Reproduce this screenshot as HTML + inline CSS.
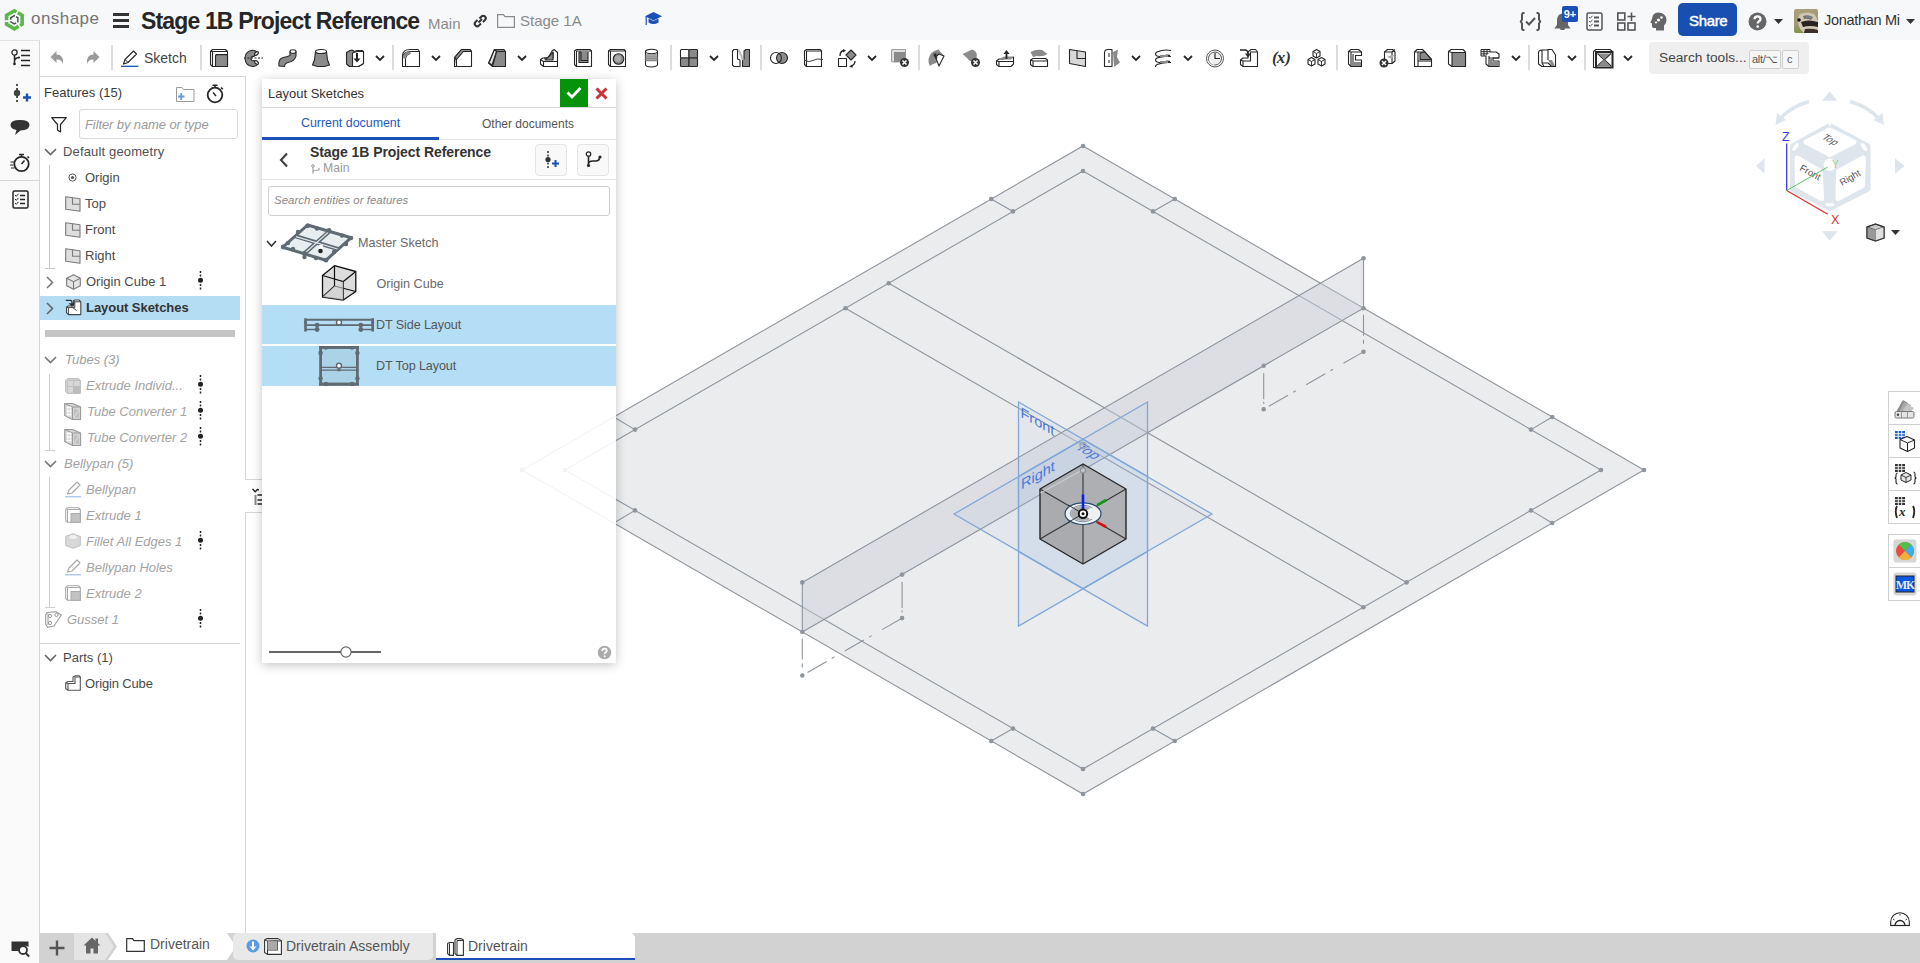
<!DOCTYPE html>
<html><head><meta charset="utf-8">
<style>
*{box-sizing:border-box;margin:0;padding:0}
html,body{width:1920px;height:963px;overflow:hidden;background:#fff;font-family:"Liberation Sans",sans-serif;color:#333}
.a{position:absolute}
.t{position:absolute;white-space:nowrap;line-height:1}
svg{position:absolute;overflow:visible}
#hdr{left:0;top:0;width:1920px;height:40px;background:#f7f8fa}
#tb{left:39px;top:40px;width:1881px;height:37px;background:#fff}
#lcol{left:0;top:40px;width:40px;height:923px;background:#fafafa;border-right:1px solid #d6d6d6;border-top:1px solid #e2e2e2}
#fp{left:39px;top:76px;width:207px;height:857px;background:#fff;border:1px solid #d6d6d6;border-bottom:none}
#bot{left:39px;top:933px;width:1881px;height:30px;background:#d2d2d2}
.sep{position:absolute;top:45px;width:2px;height:25px;background:#dcdcdc}
.fi{font-size:13px;color:#4a4a4a}
.gi{font-size:13px;color:#a3a3a3;font-style:italic}
</style></head>
<body>
<div id="hdr" class="a"></div>
<div id="tb" class="a"></div>
<div id="lcol" class="a"></div>
<svg class="a" style="left:0;top:0" width="1920" height="963" viewBox="0 0 1920 963">
<polygon points="1083.0,146.0 1644.0,470.0 1083.0,794.0 522.0,470.0" fill="#ebecee" stroke="#8e959c" stroke-width="1.1"/>
<polygon points="1083.0,171.0 1601.0,470.0 1083.0,769.0 565.0,470.0" fill="none" stroke="#8e959c" stroke-width="1.1"/>
<path d="M991.2 199.0L1013.0 211.4 M991.2 741.0L1013.0 728.6 M1174.8 199.0L1153.0 211.4 M1174.8 741.0L1153.0 728.6 M1552.2 417.0L1531.0 429.6 M613.8 417.0L635.0 429.6 M1552.2 523.0L1531.0 510.4 M613.8 523.0L635.0 510.4 M888.7 283.2L1406.6 582.4 M845.5 308.2L1363.4 607.2" stroke="#8e959c" stroke-width="1.1" fill="none"/>
<polygon points="802.3,582.4 1363.5,258.3 1363.5,308.2 802.3,632.0" fill="#c9ced6" fill-opacity="0.45" stroke="#8e959c" stroke-width="1.1"/>
<path d="M1363.5 308.2L1363.5 351.8 M802.3 632.0L802.3 675.5" stroke="#8e959c" stroke-width="1.1" fill="none" stroke-dasharray="0 6.5 21 4 4 20"/>
<path d="M1263.7 365.8L1263.7 409.2 M902.1 574.6L902.1 618.1" stroke="#8e959c" stroke-width="1.1" fill="none" stroke-dasharray="0 7.5 26 2.5 2 20"/>
<path d="M1263.7 409.2L1363.5 351.8 M802.3 675.5L902.1 618.1" stroke="#8e959c" stroke-width="1.1" fill="none" stroke-dasharray="0 6 22 6 3 6" stroke-dashoffset="0"/>
<g fill="#8e959c"><circle cx="991.2" cy="199.0" r="2.3"/><circle cx="1013.0" cy="211.4" r="2.3"/><circle cx="991.2" cy="741.0" r="2.3"/><circle cx="1013.0" cy="728.6" r="2.3"/><circle cx="1174.8" cy="199.0" r="2.3"/><circle cx="1153.0" cy="211.4" r="2.3"/><circle cx="1174.8" cy="741.0" r="2.3"/><circle cx="1153.0" cy="728.6" r="2.3"/><circle cx="1552.2" cy="417.0" r="2.3"/><circle cx="1531.0" cy="429.6" r="2.3"/><circle cx="613.8" cy="417.0" r="2.3"/><circle cx="635.0" cy="429.6" r="2.3"/><circle cx="1552.2" cy="523.0" r="2.3"/><circle cx="1531.0" cy="510.4" r="2.3"/><circle cx="613.8" cy="523.0" r="2.3"/><circle cx="635.0" cy="510.4" r="2.3"/><circle cx="1083.0" cy="146.0" r="2.3"/><circle cx="1644.0" cy="470.0" r="2.3"/><circle cx="1083.0" cy="794.0" r="2.3"/><circle cx="522.0" cy="470.0" r="2.3"/><circle cx="1083.0" cy="171.0" r="2.3"/><circle cx="1601.0" cy="470.0" r="2.3"/><circle cx="1083.0" cy="769.0" r="2.3"/><circle cx="565.0" cy="470.0" r="2.3"/><circle cx="888.7" cy="283.2" r="2.3"/><circle cx="1406.6" cy="582.4" r="2.3"/><circle cx="845.5" cy="308.2" r="2.3"/><circle cx="1363.4" cy="607.2" r="2.3"/><circle cx="802.3" cy="582.4" r="2.3"/><circle cx="1363.5" cy="258.3" r="2.3"/><circle cx="1363.5" cy="308.2" r="2.3"/><circle cx="802.3" cy="632.0" r="2.3"/><circle cx="1363.5" cy="351.8" r="2.3"/><circle cx="1263.7" cy="365.8" r="2.3"/><circle cx="1263.7" cy="409.2" r="2.3"/><circle cx="802.3" cy="675.5" r="2.3"/><circle cx="902.1" cy="574.6" r="2.3"/><circle cx="902.1" cy="618.1" r="2.3"/></g>
<polygon points="1018.5,402.0 1147.5,476.5 1147.5,626.0 1018.5,551.5" fill="#9dbbe0" fill-opacity="0.10" stroke="#80a8d6" stroke-width="1.3"/>
<polygon points="1147.5,402.0 1018.5,476.5 1018.5,626.0 1147.5,551.5" fill="#9dbbe0" fill-opacity="0.10" stroke="#80a8d6" stroke-width="1.3"/>
<polygon points="954.0,514.0 1083.0,439.5 1212.0,514.0 1083.0,588.5" fill="#9dbbe0" fill-opacity="0.10" stroke="#80a8d6" stroke-width="1.3"/>
<g fill="#4a78d8" font-family="Liberation Sans" font-size="14.5">
<text transform="matrix(1,0.57735,0,1,1020.5,416.7)">Front</text>
<text transform="matrix(1,-0.57735,0,1,1021,489.8)">Right</text>
<text transform="matrix(0.866,0.5,-0.866,0.5,1074,448)">Top</text>
</g>
<circle cx="1083" cy="445.5" r="3" fill="none" stroke="#9aa3ad" stroke-width="1.3"/>
<polygon points="1083.0,464.0 1126.0,489.0 1083.0,514.0 1040.0,489.0" fill="#adafb2"/>
<polygon points="1040.0,489.0 1083.0,514.0 1083.0,564.0 1040.0,539.0" fill="#a9abae"/>
<polygon points="1126.0,489.0 1126.0,539.0 1083.0,564.0 1083.0,514.0" fill="#afb1b4"/>
<polygon points="1083.0,464.0 1126.0,489.0 1126.0,539.0 1083.0,564.0 1040.0,539.0 1040.0,489.0" fill="none" stroke="#262626" stroke-width="1.4" stroke-linejoin="round"/>
<path d="M1083 514L1083 464 M1083 514L1126 489 M1083 514L1126 539 M1083 514L1083 564 M1083 514L1040 539 M1083 514L1040 489" stroke="#333" stroke-width="1.1"/>
<path d="M1040.5 493L1082.6 470" stroke="#c9ccd0" stroke-width="1.3"/>
<circle cx="1083" cy="470.3" r="2.6" fill="#c4c6c9" stroke="#8f959b" stroke-width="1.2"/>
<ellipse cx="1083" cy="513.7" rx="18" ry="10.8" fill="#eef0f2" stroke="#2a4d72" stroke-width="1.2"/>
<path d="M1092.3 508A12.6 8.3 0 1 0 1092.3 519L1083 513.7Z" fill="#abadb0" stroke="#f4f5f6" stroke-width="1.6"/>
<path d="M1083 513.7L1068 505M1083 513.7L1068 522.5" stroke="#333" stroke-width="1"/>
<path d="M1092.3 508A12.6 8.3 0 1 0 1092.3 519" fill="none" stroke="#2a4d72" stroke-width="0.6"/>
<path d="M1083 494.5V510" stroke="#0c1ee8" stroke-width="2.6"/>
<path d="M1097.2 505.2L1106.2 500" stroke="#129a12" stroke-width="2.6"/>
<path d="M1097.2 522.2L1106.2 527" stroke="#d41414" stroke-width="2.6"/>
<circle cx="1083" cy="513.7" r="5.2" fill="#111"/><circle cx="1083" cy="513.7" r="3.2" fill="#fff"/><circle cx="1083" cy="513.7" r="1.5" fill="#111"/>
</svg>
<div id="fp" class="a"></div>
<div id="bot" class="a"></div>
<svg style="left:0;top:0" width="40" height="40">
 <path d="M14.35 10.80 L22.14 15.30 L22.14 24.30 L14.35 28.80 L6.56 24.30 L6.56 15.30 Z" fill="none" stroke="#5ab946" stroke-width="3.6" stroke-dasharray="16.4 1.6" stroke-dashoffset="14"/>
 <path d="M14.35 15.70 L17.90 17.75 L17.90 21.85 L14.35 23.90 L10.80 21.85 L10.80 17.75 Z" fill="none" stroke="#505050" stroke-width="1.5" stroke-dasharray="6.9 1.3" stroke-dashoffset="6.2"/>
</svg>
<div class="t" style="left:31px;top:10px;font-size:17px;color:#747474;letter-spacing:0.45px">onshape</div>
<div class="a" style="left:113px;top:13px;width:16px;height:3px;background:#333"></div>
<div class="a" style="left:113px;top:19px;width:16px;height:3px;background:#333"></div>
<div class="a" style="left:113px;top:25px;width:16px;height:3px;background:#333"></div>
<div class="t" style="left:141px;top:10px;font-size:23px;font-weight:bold;color:#262626;letter-spacing:-0.85px">Stage 1B Project Reference</div>
<div class="t" style="left:428px;top:16px;font-size:15px;color:#8a8a8a">Main</div>
<svg style="left:473px;top:14px" width="15" height="14" viewBox="0 0 15 14"><g fill="none" stroke="#333" stroke-width="2"><path d="M6.5 4.5L8.5 2.5A2.3 2.3 0 0 1 12 6L10 8"/><path d="M8 9.5L6 11.5A2.3 2.3 0 0 1 2.5 8L4.5 6"/><path d="M5.5 8.5L9 5"/></g></svg>
<svg style="left:497px;top:14px" width="19" height="14" viewBox="0 0 19 14"><path d="M0.6 0.6H6.5L8 2.6H17.4V13.4H0.6Z" fill="none" stroke="#8a8a8a" stroke-width="1.2"/></svg>
<div class="t" style="left:520px;top:13px;font-size:15px;color:#8a8a8a">Stage 1A</div>
<svg style="left:645px;top:12px" width="17" height="16" viewBox="0 0 17 16"><path d="M8.5 0L17 4.2L8.5 8.4L0 4.2Z" fill="#1a50b8"/><path d="M3.5 6.5V10.5Q8.5 13.5 13.5 10.5V6.5L8.5 9Z" fill="#1a50b8"/><path d="M1.2 4.5V13" stroke="#1a50b8" stroke-width="1.2"/></svg>

<!-- right header -->
<svg style="left:1520px;top:12px" width="21" height="19" viewBox="0 0 21 19"><g fill="none" stroke="#555" stroke-width="2"><path d="M4.5 1H3.5Q2 1 2 3V7.5L0.8 9.5L2 11.5V16Q2 18 3.5 18H4.5"/><path d="M16.5 1H17.5Q19 1 19 3V7.5L20.2 9.5L19 11.5V16Q19 18 17.5 18H16.5"/><path d="M6 9.5L9 12.5L15 6"/></g></svg>
<svg style="left:1554px;top:6px" width="25" height="24" viewBox="0 0 25 24"><path d="M8 7.5Q3 8.5 3 14.5V19L0.2 22.5H16.5L14 19V14" fill="#666"/><rect x="6" y="21" width="5" height="3" rx="1.5" fill="#666"/><rect x="8" y="0" width="16" height="16" rx="2" fill="#1a50b8"/><text x="16" y="12" font-family="Liberation Sans" font-weight="bold" font-size="11" fill="#fff" text-anchor="middle">9+</text></svg>
<svg style="left:1586px;top:12px" width="17" height="19" viewBox="0 0 17 19"><rect x="1" y="1" width="15" height="17" rx="1.5" fill="none" stroke="#555" stroke-width="1.5"/><g stroke="#555" stroke-width="1.8"><path d="M8 5.5H13M8 9.5H13M8 13.5H13"/></g><g fill="none" stroke="#555" stroke-width="1"><path d="M3 5L4.3 6.3L6.5 3.8M3 9L4.3 10.3L6.5 7.8M3 13L4.3 14.3L6.5 11.8"/></g></svg>
<svg style="left:1617px;top:12px" width="19" height="19" viewBox="0 0 19 19"><g fill="none" stroke="#555" stroke-width="1.6"><rect x="0.8" y="1" width="7" height="7"/><rect x="0.8" y="11" width="7" height="7"/><rect x="11" y="11" width="7" height="7"/><path d="M14.5 0.5V9M10.5 4.5H18.5"/></g></svg>
<svg style="left:1650px;top:12px" width="17" height="19" viewBox="0 0 17 19"><path d="M8 0.5Q16 0.5 16.5 8Q16.5 11.5 14 13.5V18.5H6V16H3.5Q2 16 2 14V11.5L0.3 10.5L2 7Q2.5 0.5 8 0.5Z" fill="#666"/><g fill="#f7f8fa"><circle cx="8.5" cy="8" r="1.6"/><circle cx="11.5" cy="5.5" r="1.3"/><circle cx="6" cy="10.5" r="1.1"/></g></svg>
<div class="a" style="left:1678px;top:3px;width:59px;height:33px;background:#1a4fb2;border-radius:5px"></div>
<div class="t" style="left:1689px;top:12.5px;font-size:15px;color:#fff;letter-spacing:-0.35px;-webkit-text-stroke:0.45px #fff">Share</div>
<svg style="left:1748px;top:12px" width="19" height="19" viewBox="0 0 19 19"><circle cx="9.5" cy="9.5" r="9" fill="#666"/><path d="M6.5 7.2Q6.5 4.3 9.5 4.3Q12.5 4.3 12.5 7Q12.5 8.6 10.8 9.5Q9.7 10.2 9.7 11.5" fill="none" stroke="#fff" stroke-width="2.2"/><circle cx="9.7" cy="14.6" r="1.3" fill="#fff"/></svg>
<svg style="left:1774px;top:19px" width="9" height="5" viewBox="0 0 9 5"><path d="M0 0H9L4.5 5Z" fill="#333"/></svg>
<svg style="left:1794px;top:9px" width="24" height="24" viewBox="0 0 24 24"><defs><linearGradient id="av" x1="0" y1="0" x2="0.3" y2="1"><stop offset="0" stop-color="#b0a07a"/><stop offset="0.6" stop-color="#a09a70"/><stop offset="1" stop-color="#7e9048"/></linearGradient></defs><rect width="24" height="24" rx="2" fill="url(#av)"/><path d="M6 5Q13 2 20 5Q24 9 24 16V24H10Q5 20 4 14Q3 9 6 5Z" fill="#cfc6b6"/><path d="M7 13Q14 10 24 13V18Q16 16 9 18Z" fill="#2a2420"/><path d="M11 20Q18 19 24 21V24H10Z" fill="#3a3028"/><path d="M9 7Q14 5 19 8L17 11Q13 9 10 10Z" fill="#7a7060"/><circle cx="5" cy="11" r="1.8" fill="#111"/><path d="M12 8Q15 7 17 9" stroke="#6a8aa0" stroke-width="1.2" fill="none"/></svg>
<div class="t" style="left:1824px;top:12px;font-size:14.5px;color:#333;letter-spacing:-0.3px;margin-top:1px">Jonathan Mi</div>
<svg style="left:1906px;top:19px" width="9" height="5" viewBox="0 0 9 5"><path d="M0 0H9L4.5 5Z" fill="#333"/></svg>

<svg style="left:11px;top:49px" width="20" height="18" viewBox="0 0 20 18"><circle cx="3.5" cy="3.5" r="2.6" fill="none" stroke="#262626" stroke-width="1.3"/><path d="M3.5 6V15M3.5 12Q3.5 9 8 8.5" fill="none" stroke="#262626" stroke-width="1.5"/><circle cx="3.5" cy="15" r="1.3" fill="#262626"/><circle cx="8" cy="8.5" r="1.1" fill="#262626"/><path d="M10 1.5H19M10 6.5H19M10 11.5H19M10 16.5H19" stroke="#262626" stroke-width="1.6"/></svg>
<svg style="left:50px;top:50px" width="15" height="15" viewBox="0 0 15 15"><path d="M0.5 7L6.5 1V4.5Q14 4.5 13 14Q11.5 9 6.5 9.5V13Z" fill="#9a9a9a"/></svg>
<svg style="left:85px;top:50px" width="15" height="15" viewBox="0 0 15 15"><path d="M14.5 7L8.5 1V4.5Q1 4.5 2 14Q3.5 9 8.5 9.5V13Z" fill="#9a9a9a"/></svg>
<div class="sep" style="left:111px"></div>
<svg style="left:121px;top:50px" width="18" height="18" viewBox="0 0 18 18"><path d="M2.5 14L4 9.5L12.5 1L15.5 4L7 12.5Z" fill="none" stroke="#262626" stroke-width="1.1" stroke-linejoin="round"/><path d="M4 9.5L7 12.5" stroke="#262626" stroke-width="1"/><path d="M0 16.3H17.5" stroke="#1a50b8" stroke-width="1.3"/></svg>
<div class="t" style="left:144px;top:51px;font-size:14px;color:#444">Sketch</div>
<div class="sep" style="left:200px"></div>
<svg style="left:210px;top:49px" width="20" height="19" viewBox="0 0 20 19"><path d="M0.5 2.5L2.5 0.5H15.5L17.5 2.5V17.5H2.5L0.5 15.5Z" fill="#fff" stroke="#262626" stroke-width="1.1" stroke-linejoin="round"/><path d="M2.5 17.5V2.5H17.5M0.5 2.5H2.5" fill="none" stroke="#262626" stroke-width="1.1" stroke-linejoin="round"/><rect x="5.5" y="6.5" width="12" height="11" fill="#8a8a8a" stroke="#262626" stroke-width="1.1" stroke-linejoin="round"/><path d="M5.5 6.5L6.5 5.5H16.5L17.5 6.5" fill="#bbb" stroke="#262626" stroke-width="1.1" stroke-linejoin="round"/></svg>
<svg style="left:244px;top:49px" width="20" height="19" viewBox="0 0 20 19"><path d="M13 3Q10 0.5 7 1.5Q1 3 1 9.5Q1.5 17 9 17.5Q12 17.5 14 15L10 11.5Q9 12 8 11.5Q6 10 7.5 8Q9 7 10 7.5Z" fill="#8a8a8a" stroke="#262626" stroke-width="1.1" stroke-linejoin="round"/><ellipse cx="12.5" cy="4.5" rx="1.4" ry="2.2" transform="rotate(45 12.5 4.5)" fill="#fff" stroke="#262626" stroke-width="1.1" stroke-linejoin="round"/><ellipse cx="12.5" cy="13.5" rx="1.4" ry="2.2" transform="rotate(-45 12.5 13.5)" fill="#fff" stroke="#262626" stroke-width="1.1" stroke-linejoin="round"/><path d="M0 9H19" stroke="#262626" stroke-width="1" stroke-dasharray="2 1.5"/></svg>
<svg style="left:278px;top:49px" width="20" height="19" viewBox="0 0 20 19"><path d="M1 17Q0 10 5 8.5Q9 8 12 6.5V2.5H18V7Q17 12 10 13.5Q7 14 6.5 17.5Z" fill="#8a8a8a" stroke="#262626" stroke-width="1.1" stroke-linejoin="round"/><ellipse cx="15" cy="2.6" rx="3" ry="1.9" fill="#fff" stroke="#262626" stroke-width="1.1" stroke-linejoin="round"/></svg>
<svg style="left:312px;top:49px" width="20" height="19" viewBox="0 0 20 19"><path d="M3.5 2.5L2.5 11L0.5 16L5.5 17.5H12.5L17.5 16L15.5 11L14.5 2.5Z" fill="#8a8a8a" stroke="#262626" stroke-width="1.1" stroke-linejoin="round"/><ellipse cx="9" cy="2.5" rx="5.5" ry="2" fill="#fff" stroke="#262626" stroke-width="1.1" stroke-linejoin="round"/></svg>
<svg style="left:346px;top:49px" width="20" height="19" viewBox="0 0 20 19"><path d="M0.5 3.5L4 1.5Q7 0.5 8 2.5L11 1.5H16L17.5 2.5V14.5L12.5 17.5H3.5L0.5 15Z" fill="#8a8a8a" stroke="#262626" stroke-width="1.1" stroke-linejoin="round"/><path d="M6.5 4Q9 3 12 2.5H17.5V14.5L12.5 17.5H6.5Z" fill="#fff" stroke="#262626" stroke-width="1.1" stroke-linejoin="round"/><path d="M11 4V10" stroke="#262626" stroke-width="2"/><path d="M7.5 9.5H14.5L11 13.5Z" fill="#262626"/></svg>
<svg style="left:375px;top:55px" width="10" height="7" viewBox="0 0 10 7"><path d="M1 1L5 5L9 1" fill="none" stroke="#262626" stroke-width="1.8"/></svg>
<div class="sep" style="left:392px"></div>
<svg style="left:402px;top:49px" width="20" height="19" viewBox="0 0 20 19"><path d="M0.5 17.5V7Q0.5 0.5 8 0.5H16L17.5 2.5V17.5Z" fill="#fff" stroke="#262626" stroke-width="1.1" stroke-linejoin="round"/><path d="M0.5 9Q1 3 7.5 2.5H17.5M3.5 17.5V10Q4 5 8.5 4.5" fill="none" stroke="#262626" stroke-width="1.1" stroke-linejoin="round"/><path d="M1 9Q1 3 7.5 2.5L9 4.5Q4 5 3.5 10Z" fill="#8a8a8a"/></svg>
<svg style="left:431px;top:55px" width="10" height="7" viewBox="0 0 10 7"><path d="M1 1L5 5L9 1" fill="none" stroke="#262626" stroke-width="1.8"/></svg>
<svg style="left:454px;top:49px" width="20" height="19" viewBox="0 0 20 19"><path d="M0.5 17.5V8.5L7.5 0.5H16L17.5 2.5V17.5H2.5Z" fill="#fff" stroke="#262626" stroke-width="1.1" stroke-linejoin="round"/><path d="M0.5 8.5L7.5 0.5H16L17.5 2.5H9.5L2.5 10.5V17.5" fill="#8a8a8a" stroke="#262626" stroke-width="1.1" stroke-linejoin="round"/><path d="M2.5 10.5L0.5 8.5" stroke="#262626" stroke-width="1.1" stroke-linejoin="round"/></svg>
<svg style="left:488px;top:49px" width="20" height="19" viewBox="0 0 20 19"><path d="M6.5 0.5H16L17.5 2.5V17.5H4.5L0.5 14Z" fill="#8a8a8a" stroke="#262626" stroke-width="1.1" stroke-linejoin="round"/><path d="M6.5 0.5L8.5 2.5L4.5 17.5M8.5 2.5H17.5" fill="none" stroke="#262626" stroke-width="1.1" stroke-linejoin="round"/><path d="M6.5 0.5L8.5 2.5L4 16L1 14Z" fill="#e8e8e8" stroke="#262626" stroke-width="1.1" stroke-linejoin="round"/></svg>
<svg style="left:517px;top:55px" width="10" height="7" viewBox="0 0 10 7"><path d="M1 1L5 5L9 1" fill="none" stroke="#262626" stroke-width="1.8"/></svg>
<svg style="left:540px;top:49px" width="20" height="19" viewBox="0 0 20 19"><path d="M0.5 10.5L3 9H8L12 2L14 0.5L17.5 3.5V17.5H3.5L0.5 15Z" fill="#fff" stroke="#262626" stroke-width="1.1" stroke-linejoin="round"/><path d="M4 9H13V2.5M3.5 17.5V12.5L0.5 10.5M3.5 12.5H17.5" fill="none" stroke="#262626" stroke-width="1.1" stroke-linejoin="round"/><path d="M5 11L13 3.5V11Z" fill="#8a8a8a" stroke="#262626" stroke-width="1.1" stroke-linejoin="round"/></svg>
<svg style="left:574px;top:49px" width="20" height="19" viewBox="0 0 20 19"><path d="M0.5 2L2.5 0.5H16L17.5 2V17.5H2.5L0.5 15.5Z" fill="#fff" stroke="#262626" stroke-width="1.1" stroke-linejoin="round"/><path d="M2.5 17.5V2H17.5" fill="none" stroke="#262626" stroke-width="1.1" stroke-linejoin="round"/><path d="M5 3V13.5H14V3" fill="#8a8a8a" stroke="#262626" stroke-width="1.1" stroke-linejoin="round"/><path d="M5 3H7V11.5H14" fill="none" stroke="#262626" stroke-width="1.1" stroke-linejoin="round"/></svg>
<svg style="left:608px;top:49px" width="20" height="19" viewBox="0 0 20 19"><path d="M0.5 2L2.5 0.5H16L17.5 2V17.5H2.5L0.5 15.5Z" fill="#fff" stroke="#262626" stroke-width="1.1" stroke-linejoin="round"/><path d="M2.5 17.5V2H17.5M0.5 2H2.5" fill="none" stroke="#262626" stroke-width="1.1" stroke-linejoin="round"/><circle cx="10.5" cy="10" r="5.3" fill="#8a8a8a" stroke="#262626" stroke-width="1.1" stroke-linejoin="round"/><circle cx="10" cy="9.5" r="3.2" fill="#aaa"/></svg>
<svg style="left:645px;top:49px" width="14" height="19" viewBox="0 0 14 19"><path d="M0.5 2.5V15.5A6 2.5 0 0 0 12.5 15.5V2.5" fill="#fff" stroke="#262626" stroke-width="1.1" stroke-linejoin="round"/><ellipse cx="6.5" cy="2.5" rx="6" ry="2.2" fill="#fff" stroke="#262626" stroke-width="1.1" stroke-linejoin="round"/><path d="M0.5 6H12.5M0.5 7.8H12.5M0.5 9.6H12.5M0.5 11.4H12.5" stroke="#8a8a8a" stroke-width="1.2"/><rect x="0.5" y="5" width="12" height="7.5" fill="#8a8a8a" opacity=".55"/></svg>
<div class="sep" style="left:670px"></div>
<svg style="left:680px;top:49px" width="20" height="19" viewBox="0 0 20 19"><rect x="0.5" y="0.5" width="8.5" height="8.5" rx="1" fill="#fff" stroke="#262626" stroke-width="1.1" stroke-linejoin="round"/><rect x="9" y="0.5" width="8.5" height="8.5" rx="1" fill="#8a8a8a" stroke="#262626" stroke-width="1.1" stroke-linejoin="round"/><rect x="0.5" y="9" width="8.5" height="8.5" rx="1" fill="#8a8a8a" stroke="#262626" stroke-width="1.1" stroke-linejoin="round"/><rect x="9" y="9" width="8.5" height="8.5" rx="1" fill="#8a8a8a" stroke="#262626" stroke-width="1.1" stroke-linejoin="round"/></svg>
<svg style="left:709px;top:55px" width="10" height="7" viewBox="0 0 10 7"><path d="M1 1L5 5L9 1" fill="none" stroke="#262626" stroke-width="1.8"/></svg>
<svg style="left:732px;top:49px" width="20" height="19" viewBox="0 0 20 19"><path d="M0.5 2L2 0.5H5.5V10L8 11V17.5H2L0.5 16Z" fill="#fff" stroke="#262626" stroke-width="1.1" stroke-linejoin="round"/><path d="M12 2L14 0.5H17.5V17.5H10.5V11L12 10Z" fill="#8a8a8a" stroke="#262626" stroke-width="1.1" stroke-linejoin="round"/><path d="M6.5 0.5L11 11" stroke="#bbb" stroke-width="2"/></svg>
<div class="sep" style="left:760px"></div>
<svg style="left:770px;top:49px" width="20" height="19" viewBox="0 0 20 19"><circle cx="6" cy="9" r="5.5" fill="#fff" stroke="#262626" stroke-width="1.1" stroke-linejoin="round"/><circle cx="12" cy="9" r="5.5" fill="#8a8a8a" stroke="#262626" stroke-width="1.1" stroke-linejoin="round"/><path d="M9 4.4A5.5 5.5 0 0 1 9 13.6" fill="none" stroke="#262626" stroke-width="1.1" stroke-linejoin="round"/></svg>
<svg style="left:804px;top:49px" width="20" height="19" viewBox="0 0 20 19"><path d="M0.5 2L2.5 0.5H16L17.5 2V17.5H2.5L0.5 15.5Z" fill="#fff" stroke="#262626" stroke-width="1.1" stroke-linejoin="round"/><path d="M2.5 17.5V2H17.5" fill="none" stroke="#262626" stroke-width="1.1" stroke-linejoin="round"/><path d="M0 11Q5 14 9 11.5Q13 9 19 10.5" fill="none" stroke="#444" stroke-width="1"/></svg>
<svg style="left:838px;top:49px" width="20" height="19" viewBox="0 0 20 19"><rect x="0.5" y="9.5" width="8" height="8" fill="#fff" stroke="#262626" stroke-width="1.1" stroke-linejoin="round"/><path d="M13 1L18 6L13 11L8 6Z" fill="#8a8a8a" stroke="#262626" stroke-width="1.1" stroke-linejoin="round"/><path d="M2 7Q2 2 6 1.5" fill="none" stroke="#262626" stroke-width="1.3"/><path d="M5 0L8 1.5L5 3.5Z" fill="#262626"/><path d="M17 12Q17 16 12.5 17.5" fill="none" stroke="#262626" stroke-width="1.3"/><path d="M14 15.5L11 18L15 18.5Z" fill="#262626"/></svg>
<svg style="left:867px;top:55px" width="10" height="7" viewBox="0 0 10 7"><path d="M1 1L5 5L9 1" fill="none" stroke="#262626" stroke-width="1.8"/></svg>
<svg style="left:891px;top:49px" width="20" height="19" viewBox="0 0 20 19"><path d="M0.5 1.5L1.5 0.5H14.5V13H1.5L0.5 12Z" fill="#e0e0e0" stroke="#262626" stroke-width="1.1" stroke-linejoin="round" stroke-opacity=".4"/><rect x="3" y="3" width="11.5" height="10" fill="#8a8a8a"/><circle cx="13.5" cy="13.5" r="4.5" fill="#333"/><path d="M11.5 11.5L15.5 15.5M15.5 11.5L11.5 15.5" stroke="#fff" stroke-width="1.5"/></svg>
<div class="sep" style="left:918px"></div>
<svg style="left:927px;top:49px" width="20" height="19" viewBox="0 0 20 19"><path d="M1.5 10Q3 2 11.5 0.5L13.5 3L17 6.5Q12 9 9 14Q5 15 3 17Q1 14 1.5 10Z" fill="#8a8a8a"/><path d="M8.5 8L12 5L17 7L14 13L12 17L10 12Z" fill="#fff" stroke="#262626" stroke-width="1.1" stroke-linejoin="round"/><path d="M7 6L10 9.5" stroke="#262626" stroke-width="1.5"/><path d="M6 4.5H9.5V8Z" fill="#262626"/></svg>
<svg style="left:962px;top:49px" width="20" height="19" viewBox="0 0 20 19"><path d="M0.5 5Q5 3 10 0.5Q13 1 14.5 4Q16 9 12 13Q8 13 5 9Q3 7 0.5 5Z" fill="#8a8a8a"/><circle cx="13.5" cy="13.5" r="4.5" fill="#333"/><path d="M11.5 11.5L15.5 15.5M15.5 11.5L11.5 15.5" stroke="#fff" stroke-width="1.5"/></svg>
<svg style="left:996px;top:49px" width="20" height="19" viewBox="0 0 20 19"><path d="M0.5 12L3 10H7L17.5 8V15L15 17.5H3L0.5 15.5Z" fill="#fff" stroke="#262626" stroke-width="1.1" stroke-linejoin="round"/><path d="M3 17.5V12.5H17.5M0.5 12L3 12.5" fill="none" stroke="#262626" stroke-width="1.1" stroke-linejoin="round"/><path d="M3 10L8 7.5H15L17.5 8.5L15 10.5H4Z" fill="#8a8a8a"/><path d="M10.5 10V4" stroke="#262626" stroke-width="1.8"/><path d="M7.5 5H13.5L10.5 1Z" fill="#262626"/></svg>
<svg style="left:1030px;top:49px" width="20" height="19" viewBox="0 0 20 19"><path d="M0.5 11L3 9.5H15.5L17.5 11V17.5H3L0.5 15.5Z" fill="#fff" stroke="#262626" stroke-width="1.1" stroke-linejoin="round"/><path d="M3 17.5V12H17.5M0.5 11L3 12" fill="none" stroke="#262626" stroke-width="1.1" stroke-linejoin="round"/><path d="M0.5 3Q6 0 12 1L17.5 5Q13 8 7 7L3 8Z" fill="#8a8a8a"/></svg>
<div class="sep" style="left:1058px"></div>
<svg style="left:1069px;top:49px" width="20" height="19" viewBox="0 0 20 19"><path d="M0.5 0.5L16.5 3V17.5L0.5 14.5Z" fill="#d8d8d8" stroke="#262626" stroke-width="1.1" stroke-linejoin="round"/><path d="M8 2V9.5H16.5" fill="none" stroke="#262626" stroke-width="1.1" stroke-linejoin="round"/></svg>
<svg style="left:1104px;top:49px" width="17" height="19" viewBox="0 0 17 19"><path d="M0.5 17.5V4Q0.5 0.5 4 0.5H8V17.5Z" fill="#fff" stroke="#262626" stroke-width="1.1" stroke-linejoin="round"/><path d="M5 4V8M5 11V14" stroke="#262626" stroke-width="1"/><path d="M9 3L14 0.5L13 8L16 13.5L10 18Z" fill="#8a8a8a"/></svg>
<svg style="left:1131px;top:55px" width="10" height="7" viewBox="0 0 10 7"><path d="M1 1L5 5L9 1" fill="none" stroke="#262626" stroke-width="1.8"/></svg>
<svg style="left:1154px;top:49px" width="20" height="19" viewBox="0 0 20 19"><g fill="none" stroke="#262626" stroke-width="1.2"><path d="M17 1.5Q10 0 3 3Q0 5 3 7Q8 8.5 15 7Q17 6 12 6"/><path d="M17 7.5Q10 6.5 3 9Q0 11 3 13Q8 14.5 15 13Q17 12 12 12"/><path d="M17 13.5Q10 13 3 15.5Q1 17 1.5 18"/></g><path d="M6 7H14M6 13H14" stroke="#8a8a8a" stroke-width="2"/></svg>
<svg style="left:1183px;top:55px" width="10" height="7" viewBox="0 0 10 7"><path d="M1 1L5 5L9 1" fill="none" stroke="#262626" stroke-width="1.8"/></svg>
<svg style="left:1206px;top:49px" width="20" height="19" viewBox="0 0 20 19"><circle cx="9" cy="9.5" r="8.5" fill="#fff" stroke="#555" stroke-width="1"/><circle cx="9" cy="9.5" r="6.5" fill="#eee" stroke="#555" stroke-width="1"/><path d="M9 4V9.5H14" fill="none" stroke="#262626" stroke-width="1.2"/><path d="M3 9.5A6 6 0 0 0 9 16" fill="#fff"/></svg>
<svg style="left:1240px;top:49px" width="20" height="19" viewBox="0 0 20 19"><path d="M0.5 11L3 9H8V3L11 0.5H15.5L17.5 3V17.5H3L0.5 15.5Z" fill="#fff" stroke="#262626" stroke-width="1.1" stroke-linejoin="round"/><path d="M3 17.5V12H10.5V3H17.5M0.5 11L3 12" fill="none" stroke="#262626" stroke-width="1.1" stroke-linejoin="round"/><path d="M0 1H5Q8 1 8 5" fill="none" stroke="#262626" stroke-width="1.3"/><path d="M5 4.5H11L8 8.5Z" fill="#262626"/></svg>
<div class="t" style="left:1272px;top:49px;font-family:'Liberation Serif',serif;font-size:17px;font-weight:bold;font-style:italic;color:#333;letter-spacing:-1px">(<span style="letter-spacing:0">x</span>)</div>
<svg style="left:1307px;top:49px" width="20" height="19" viewBox="0 0 20 19"><g fill="#fff" stroke="#262626" stroke-width="1.1" stroke-linejoin="round"><path d="M6 2.5L9.5 0.5L13 2.5V7L9.5 9L6 7Z"/><path d="M1 10.5L4.5 8.5L8 10.5V15L4.5 17L1 15Z"/><path d="M11 10.5L14.5 8.5L18 10.5V15L14.5 17L11 15Z"/></g><path d="M6 2.5L9.5 4.5L13 2.5M9.5 4.5V9M1 10.5L4.5 12.5L8 10.5M4.5 12.5V17M11 10.5L14.5 12.5L18 10.5M14.5 12.5V17" fill="none" stroke="#262626" stroke-width=".9"/></svg>
<div class="sep" style="left:1336px"></div>
<svg style="left:1348px;top:49px" width="15" height="19" viewBox="0 0 15 19"><path d="M0.5 2.5L3 0.5H10.5L13.5 3V6.5H7.5V11H13.5V17.5H3L0.5 15Z" fill="#fff" stroke="#262626" stroke-width="1.1" stroke-linejoin="round"/><path d="M3 17.5V3H13.5M3 3L0.5 2.5" fill="none" stroke="#262626" stroke-width="1.1" stroke-linejoin="round"/><path d="M3.5 5H6V13H13V17H3.5Z" fill="#8a8a8a"/></svg>
<svg style="left:1379px;top:49px" width="20" height="19" viewBox="0 0 20 19"><path d="M5.5 3L8.5 0.5H13.5L16 3V12L13 14.5H5.5Z" fill="#fff" stroke="#262626" stroke-width="1.1" stroke-linejoin="round"/><path d="M5.5 3H13V14.5M13 3L16 0.5" fill="none" stroke="#262626" stroke-width="1.1" stroke-linejoin="round"/><path d="M8 8L13 6H15L13 10Z" fill="#aaa"/><circle cx="5" cy="14" r="4.5" fill="#333"/><path d="M3 12L7 16M7 12L3 16" stroke="#fff" stroke-width="1.5"/></svg>
<svg style="left:1414px;top:49px" width="20" height="19" viewBox="0 0 20 19"><path d="M0.5 3L3 0.5H8.5L11 3L17.5 10V17.5H0.5Z" fill="#fff" stroke="#262626" stroke-width="1.1" stroke-linejoin="round"/><path d="M4 17.5V3H11M4 3L0.5 3" fill="none" stroke="#262626" stroke-width="1.1" stroke-linejoin="round"/><path d="M6 4L11 3L17 10.5H6Z" fill="#8a8a8a" stroke="#262626" stroke-width="1.1" stroke-linejoin="round"/><path d="M4 12H17.5" stroke="#262626" stroke-width="1.1" stroke-linejoin="round"/></svg>
<svg style="left:1448px;top:49px" width="20" height="19" viewBox="0 0 20 19"><path d="M0.5 2.5L3 0.5H15L17.5 3V17.5H4L0.5 15Z" fill="#fff" stroke="#262626" stroke-width="1.1" stroke-linejoin="round"/><rect x="4" y="3.5" width="13.5" height="14" fill="#8a8a8a" stroke="#262626" stroke-width="1.1" stroke-linejoin="round"/><path d="M0.5 2.5L4 3.5" stroke="#262626" stroke-width="1.1" stroke-linejoin="round"/></svg>
<svg style="left:1481px;top:49px" width="20" height="19" viewBox="0 0 20 19"><path d="M0 0.5H9V7H0Z" fill="#fff" stroke="#262626" stroke-width="1"/><path d="M3 0.5V7M6 0.5V7M0 2.7H9M0 4.9H9" stroke="#262626" stroke-width="1"/><path d="M5 7L5 15L8 17.5H18V12H12V9H18V5L15 3H9" fill="#fff" stroke="#262626" stroke-width="1.1" stroke-linejoin="round"/><path d="M8 17.5V7M8 9H18" fill="none" stroke="#262626" stroke-width="1.1" stroke-linejoin="round"/><path d="M9 9.5H11.5V13H17.5V17H9Z" fill="#8a8a8a"/></svg>
<svg style="left:1511px;top:55px" width="10" height="7" viewBox="0 0 10 7"><path d="M1 1L5 5L9 1" fill="none" stroke="#262626" stroke-width="1.8"/></svg>
<div class="sep" style="left:1528px"></div>
<svg style="left:1538px;top:49px" width="18" height="19" viewBox="0 0 18 19"><path d="M0.5 4Q0.5 1 4 1V14L6 17.5H17.5V6L14 0.5H10V11" fill="#fff" stroke="#262626" stroke-width="1.1" stroke-linejoin="round"/><path d="M4 1H10M0.5 4V15L4 17.5H6M4 14H10L14 17.5" fill="none" stroke="#262626" stroke-width="1.1" stroke-linejoin="round"/><path d="M10 11L14 17L17 17L14 11Z" fill="#8a8a8a"/></svg>
<svg style="left:1567px;top:55px" width="10" height="7" viewBox="0 0 10 7"><path d="M1 1L5 5L9 1" fill="none" stroke="#262626" stroke-width="1.8"/></svg>
<div class="sep" style="left:1584px"></div>
<svg style="left:1593px;top:49px" width="21" height="20" viewBox="0 0 21 20"><path d="M0.5 2.5L3 0.5H17L19.5 2.5V18.5H0.5Z" fill="#fff" stroke="#262626" stroke-width="1.1" stroke-linejoin="round"/><rect x="3" y="3" width="16.5" height="15.5" fill="#fff" stroke="#262626" stroke-width="2"/><path d="M4.5 4.5L18 17M18 4.5L4.5 17" stroke="#262626" stroke-width="1.2"/><path d="M11 10.5L5 17H17Z" fill="#8a8a8a"/><path d="M11 10.5L5 4.5H17Z" fill="#8a8a8a"/></svg>
<svg style="left:1623px;top:55px" width="10" height="7" viewBox="0 0 10 7"><path d="M1 1L5 5L9 1" fill="none" stroke="#262626" stroke-width="1.8"/></svg>
<div class="a" style="left:1649px;top:42px;width:160px;height:32px;background:#efefef;border-radius:4px"></div>
<div class="t" style="left:1659px;top:51px;font-size:13.7px;color:#444">Search tools...</div>
<div class="a" style="left:1749px;top:50px;width:32px;height:19px;border:1px solid #cfcfcf;border-radius:2px;background:#f6f6f6"></div>
<div class="t" style="left:1752px;top:54px;font-size:11px;color:#555;letter-spacing:-0.3px">alt/⌥</div>
<div class="a" style="left:1782px;top:50px;width:17px;height:19px;border:1px solid #cfcfcf;border-radius:2px;background:#f6f6f6"></div>
<div class="t" style="left:1787px;top:54px;font-size:11px;color:#555">c</div>
<svg style="left:12px;top:83px" width="19" height="19" viewBox="0 0 19 19"><path d="M5 1V3M5 5V7M5 13V15M5 17V19" stroke="#262626" stroke-width="1.6"/><circle cx="5" cy="10" r="3.2" fill="#444"/><path d="M11 14.5H19M15 10.5V18.5" stroke="#1a50b8" stroke-width="2.4"/></svg>
<svg style="left:10px;top:119px" width="20" height="17" viewBox="0 0 20 17"><path d="M10 1Q19.5 1 19.5 6Q19.5 11 10.5 11.5L5 16L6.5 11Q0.5 10 0.5 6Q0.5 1 10 1Z" fill="#333"/></svg>
<svg style="left:10px;top:153px" width="20" height="20" viewBox="0 0 20 20"><circle cx="11.5" cy="11" r="7.2" fill="none" stroke="#262626" stroke-width="1.8"/><path d="M9 1.5H14M11.5 1.5V4" stroke="#262626" stroke-width="1.6"/><path d="M17.5 3.5L19 5" stroke="#262626" stroke-width="1.6"/><path d="M11.5 11L14.5 7.5" stroke="#262626" stroke-width="1.5"/><path d="M0.5 9H4M0 12H3.5M1 15H4.5" stroke="#262626" stroke-width="1.2"/></svg>
<div class="a" style="left:0;top:180px;width:39px;height:1px;background:#d6d6d6"></div>
<svg style="left:12px;top:190px" width="17" height="19" viewBox="0 0 17 19"><rect x="1" y="1" width="15" height="17" rx="1.5" fill="none" stroke="#262626" stroke-width="1.5"/><path d="M8 5.5H13M8 9.5H13M8 13.5H13" stroke="#262626" stroke-width="1.6"/><path d="M3 5L4.3 6.3L6.5 3.8M3 9L4.3 10.3L6.5 7.8M3 13L4.3 14.3L6.5 11.8" fill="none" stroke="#262626" stroke-width="1"/></svg>
<svg style="left:11px;top:941px" width="19" height="16" viewBox="0 0 19 16"><path d="M0.5 0.5H17.5V6A6 6 0 0 0 8 10H0.5Z" fill="#333"/><circle cx="12" cy="9" r="4" fill="none" stroke="#333" stroke-width="1.8"/><path d="M14.8 12L18 15.5" stroke="#333" stroke-width="2"/></svg>
<div class="t" style="left:44px;top:86px;font-size:13px;color:#3a3a3a">Features (15)</div>
<svg style="left:176px;top:87px" width="19" height="15" viewBox="0 0 19 15"><path d="M0.5 0.5H6L7.5 2.5H18V14.5H0.5Z" fill="none" stroke="#999" stroke-width="1"/><path d="M2 9.5H8.5M5.2 6V13" stroke="#6a9ae0" stroke-width="1.8"/></svg>
<svg style="left:206px;top:84px" width="19" height="20" viewBox="0 0 19 20"><circle cx="9" cy="11" r="7.3" fill="none" stroke="#262626" stroke-width="1.8"/><path d="M6.5 1.2H11.5M9 1.2V3.5M15 3.5L16.8 5.3" stroke="#262626" stroke-width="1.6"/><path d="M7 8.5L10 12" stroke="#262626" stroke-width="1.5"/></svg>
<svg style="left:51px;top:117px" width="16" height="16" viewBox="0 0 16 16"><path d="M0.7 0.7H15.3L9.5 7.5V15L6.5 13V7.5Z" fill="none" stroke="#262626" stroke-width="1.2" stroke-linejoin="round"/></svg>
<div class="a" style="left:79px;top:109px;width:159px;height:30px;border:1px solid #d9d9d9;border-radius:3px;background:#fff"></div>
<div class="t" style="left:85px;top:118px;font-size:13px;font-style:italic;color:#9a9a9a;letter-spacing:-0.1px">Filter by name or type</div>
<svg style="left:44px;top:148px" width="13" height="8" viewBox="0 0 13 8"><path d="M1 1L6.5 6.5L12 1" fill="none" stroke="#666" stroke-width="1.6"/></svg>
<div class="t fi" style="left:63px;top:145px;color:#505050;letter-spacing:0.15px">Default geometry</div>
<div class="a" style="left:49px;top:165px;width:1px;height:103px;background:#c8c8c8"></div>
<div class="a" style="left:45px;top:268px;width:10px;height:1px;background:#c8c8c8"></div>
<svg style="left:68px;top:173px" width="9" height="9" viewBox="0 0 9 9"><circle cx="4.5" cy="4.5" r="3.6" fill="none" stroke="#555" stroke-width="1"/><circle cx="4.5" cy="4.5" r="1.6" fill="#555"/></svg>
<div class="t fi" style="left:85px;top:171px;">Origin</div>
<svg style="left:65px;top:196px" width="16" height="16" viewBox="0 0 16 16"><path d="M0.7 0.7L15 2.8V15.3L0.7 13.3Z" fill="#dedede" stroke="#7a7a7a" stroke-width="1.1" stroke-linejoin="round"/><path d="M7.5 1.7V8.3H15" fill="none" stroke="#7a7a7a" stroke-width="1.1"/></svg>
<div class="t fi" style="left:85px;top:197px;">Top</div>
<svg style="left:65px;top:222px" width="16" height="16" viewBox="0 0 16 16"><path d="M0.7 0.7L15 2.8V15.3L0.7 13.3Z" fill="#dedede" stroke="#7a7a7a" stroke-width="1.1" stroke-linejoin="round"/><path d="M7.5 1.7V8.3H15" fill="none" stroke="#7a7a7a" stroke-width="1.1"/></svg>
<div class="t fi" style="left:85px;top:223px;">Front</div>
<svg style="left:65px;top:248px" width="16" height="16" viewBox="0 0 16 16"><path d="M0.7 0.7L15 2.8V15.3L0.7 13.3Z" fill="#dedede" stroke="#7a7a7a" stroke-width="1.1" stroke-linejoin="round"/><path d="M7.5 1.7V8.3H15" fill="none" stroke="#7a7a7a" stroke-width="1.1"/></svg>
<div class="t fi" style="left:85px;top:249px;">Right</div>
<svg style="left:46px;top:276px" width="8" height="13" viewBox="0 0 8 13"><path d="M1 1L6.5 6.5L1 12" fill="none" stroke="#777" stroke-width="1.6"/></svg>
<svg style="left:66px;top:274px" width="15" height="16" viewBox="0 0 15 16"><path d="M7.5 0.7L14.3 4.2V11.8L7.5 15.3L0.7 11.8V4.2Z" fill="#e6e6e6" stroke="#7a7a7a" stroke-width="1.1" stroke-linejoin="round"/><path d="M0.7 4.2L7.5 7.7L14.3 4.2M7.5 7.7V15.3" fill="none" stroke="#7a7a7a" stroke-width="1.1"/></svg>
<div class="t fi" style="left:86px;top:275px;">Origin Cube 1</div>
<svg style="left:198px;top:271px" width="5" height="19" viewBox="0 0 5 19"><path d="M2.5 0V2M2.5 3.5V5.5M2.5 13V15M2.5 16.5V18.5" stroke="#222" stroke-width="1.5"/><circle cx="2.5" cy="9.2" r="2.5" fill="#222"/></svg>
<div class="a" style="left:40px;top:296px;width:200px;height:24px;background:#b4dcf3"></div>
<svg style="left:46px;top:302px" width="8" height="13" viewBox="0 0 8 13"><path d="M1 1L6.5 6.5L1 12" fill="none" stroke="#666" stroke-width="1.6"/></svg>
<svg style="left:66px;top:299px" width="16" height="17" viewBox="0 0 16 17"><path d="M0.5 8.3L2.2 7H7.5V2L9 1H13L14.8 2.8V15.6H2.4L0.5 13.6Z" fill="#fff" stroke="#444" stroke-width="1.1" stroke-linejoin="round"/><path d="M2.4 15.6V8.6H8.8V2.8H14.8M0.5 8.3L2.4 8.6M7.5 2L8.8 2.8M6.8 8.6L10.5 11.5" fill="none" stroke="#444" stroke-width="1"/><path d="M-0.2 1.4H4.5Q6 1.4 6 3.5V5" fill="none" stroke="#333" stroke-width="1.2"/><path d="M2.6 4.3H9.2L5.9 7.8Z" fill="#333"/></svg>
<div class="t" style="left:86px;top:301px;font-size:13px;font-weight:bold;color:#333;letter-spacing:-0.05px">Layout Sketches</div>
<div class="a" style="left:45px;top:330px;width:190px;height:7px;background:#c4c4c4"></div>
<svg style="left:44px;top:356px" width="13" height="8" viewBox="0 0 13 8"><path d="M1 1L6.5 6.5L12 1" fill="none" stroke="#777" stroke-width="1.6"/></svg>
<div class="t gi" style="left:65px;top:353px;color:#a0a0a0">Tubes (3)</div>
<div class="a" style="left:49px;top:374px;width:1px;height:77px;background:#cfcfcf"></div>
<div class="a" style="left:45px;top:450px;width:10px;height:1px;background:#cfcfcf"></div>
<svg style="left:65px;top:378px" width="16" height="16" viewBox="0 0 16 16"><path d="M0.7 2.5L2.5 0.7H13.5L15.3 2.5V15.3H2.5L0.7 13.5Z" fill="#d8d8d8" stroke="#b5b5b5" stroke-width="1"/><path d="M2.5 15.3V2.5H15.3M8.5 2.5V15.3M2.5 8.5H15.3" fill="none" stroke="#c0c0c0" stroke-width="1"/><rect x="8.5" y="8.5" width="6.8" height="6.8" fill="#bcbcbc"/></svg>
<div class="t gi" style="left:86px;top:379px;">Extrude Individ...</div>
<svg style="left:198px;top:375px" width="5" height="19" viewBox="0 0 5 19"><path d="M2.5 0V2M2.5 3.5V5.5M2.5 13V15M2.5 16.5V18.5" stroke="#222" stroke-width="1.5"/><circle cx="2.5" cy="9.2" r="2.5" fill="#222"/></svg>
<svg style="left:64px;top:403px" width="18" height="18" viewBox="0 0 18 18"><path d="M0.7 0.5H8.7L16.6 4V16.5H8.5L0.7 12.5Z" fill="#d4d4d4" stroke="#9a9a9a" stroke-width="1.1" stroke-linejoin="round"/><path d="M0.7 0.5L8.5 4H16.6M8.5 4V16.5" fill="none" stroke="#9a9a9a" stroke-width="1"/><path d="M2.5 4.5H7.5M2.5 8H7.5M2.5 11.5H7.5" stroke="#fff" stroke-width="1.2"/><path d="M3.8 3V13.5M6.2 3V13.5" stroke="#fff" stroke-width="0.9"/><path d="M10 6L15 7V15L10 14Z" fill="#c0c0c0"/><path d="M10 14L15 7" stroke="#e0e0e0" stroke-width="1"/></svg>
<div class="t gi" style="left:87px;top:405px;">Tube Converter 1</div>
<svg style="left:198px;top:401px" width="5" height="19" viewBox="0 0 5 19"><path d="M2.5 0V2M2.5 3.5V5.5M2.5 13V15M2.5 16.5V18.5" stroke="#222" stroke-width="1.5"/><circle cx="2.5" cy="9.2" r="2.5" fill="#222"/></svg>
<svg style="left:64px;top:429px" width="18" height="18" viewBox="0 0 18 18"><path d="M0.7 0.5H8.7L16.6 4V16.5H8.5L0.7 12.5Z" fill="#d4d4d4" stroke="#9a9a9a" stroke-width="1.1" stroke-linejoin="round"/><path d="M0.7 0.5L8.5 4H16.6M8.5 4V16.5" fill="none" stroke="#9a9a9a" stroke-width="1"/><path d="M2.5 4.5H7.5M2.5 8H7.5M2.5 11.5H7.5" stroke="#fff" stroke-width="1.2"/><path d="M3.8 3V13.5M6.2 3V13.5" stroke="#fff" stroke-width="0.9"/><path d="M10 6L15 7V15L10 14Z" fill="#c0c0c0"/><path d="M10 14L15 7" stroke="#e0e0e0" stroke-width="1"/></svg>
<div class="t gi" style="left:87px;top:431px;">Tube Converter 2</div>
<svg style="left:198px;top:427px" width="5" height="19" viewBox="0 0 5 19"><path d="M2.5 0V2M2.5 3.5V5.5M2.5 13V15M2.5 16.5V18.5" stroke="#222" stroke-width="1.5"/><circle cx="2.5" cy="9.2" r="2.5" fill="#222"/></svg>
<svg style="left:44px;top:460px" width="13" height="8" viewBox="0 0 13 8"><path d="M1 1L6.5 6.5L12 1" fill="none" stroke="#777" stroke-width="1.6"/></svg>
<div class="t gi" style="left:64px;top:457px;">Bellypan (5)</div>
<div class="a" style="left:49px;top:477px;width:1px;height:130px;background:#cfcfcf"></div>
<div class="a" style="left:45px;top:607px;width:10px;height:1px;background:#cfcfcf"></div>
<svg style="left:65px;top:481px" width="17" height="17" viewBox="0 0 17 17"><path d="M2.5 13L4 9L12 1L15 4L7 12Z" fill="none" stroke="#a8a8a8" stroke-width="1.1" stroke-linejoin="round"/><path d="M0 15.8H16" stroke="#9ab8e8" stroke-width="1.1"/></svg>
<div class="t gi" style="left:86px;top:483px;">Bellypan</div>
<svg style="left:65px;top:507px" width="16" height="16" viewBox="0 0 16 16"><path d="M0.7 2.5L2.5 0.7H13.5L15.3 2.5V15.3H2.5L0.7 13.5Z" fill="#fff" stroke="#aaa" stroke-width="1.1" stroke-linejoin="round"/><path d="M2.5 15.3V2.5H15.3" fill="none" stroke="#aaa" stroke-width="1.1"/><rect x="6" y="6.5" width="9.3" height="8.8" fill="#c2c2c2" stroke="#aaa" stroke-width="1"/></svg>
<div class="t gi" style="left:86px;top:509px;">Extrude 1</div>
<svg style="left:65px;top:533px" width="16" height="16" viewBox="0 0 16 16"><path d="M8 0.7L15.3 3.5V12.5L8 15.3L0.7 12.5V3.5Z" fill="#d8d8d8" stroke="#c0c0c0" stroke-width="1"/><ellipse cx="8" cy="4" rx="4" ry="2" fill="#eee"/></svg>
<div class="t gi" style="left:86px;top:535px;">Fillet All Edges 1</div>
<svg style="left:198px;top:531px" width="5" height="19" viewBox="0 0 5 19"><path d="M2.5 0V2M2.5 3.5V5.5M2.5 13V15M2.5 16.5V18.5" stroke="#222" stroke-width="1.5"/><circle cx="2.5" cy="9.2" r="2.5" fill="#222"/></svg>
<svg style="left:65px;top:559px" width="17" height="17" viewBox="0 0 17 17"><path d="M2.5 13L4 9L12 1L15 4L7 12Z" fill="none" stroke="#a8a8a8" stroke-width="1.1" stroke-linejoin="round"/><path d="M0 15.8H16" stroke="#9ab8e8" stroke-width="1.1"/></svg>
<div class="t gi" style="left:86px;top:561px;">Bellypan Holes</div>
<svg style="left:65px;top:585px" width="16" height="16" viewBox="0 0 16 16"><path d="M0.7 2.5L2.5 0.7H13.5L15.3 2.5V15.3H2.5L0.7 13.5Z" fill="#fff" stroke="#aaa" stroke-width="1.1" stroke-linejoin="round"/><path d="M2.5 15.3V2.5H15.3" fill="none" stroke="#aaa" stroke-width="1.1"/><rect x="6" y="6.5" width="9.3" height="8.8" fill="#c2c2c2" stroke="#aaa" stroke-width="1"/></svg>
<div class="t gi" style="left:86px;top:587px;">Extrude 2</div>
<svg style="left:45px;top:611px" width="17" height="17" viewBox="0 0 17 17"><path d="M2 1.5L11 0.7L16.3 4L9 15L2.5 16.3L0.7 13V4Z" fill="none" stroke="#999" stroke-width="1.1" stroke-linejoin="round"/><circle cx="5" cy="5" r="1.6" fill="none" stroke="#999"/><circle cx="5" cy="12" r="1.6" fill="none" stroke="#999"/><circle cx="11.5" cy="4" r="1.6" fill="none" stroke="#999"/><path d="M3 2.5V14" stroke="#999" stroke-width="1"/></svg>
<div class="t gi" style="left:67px;top:613px;">Gusset 1</div>
<svg style="left:198px;top:609px" width="5" height="19" viewBox="0 0 5 19"><path d="M2.5 0V2M2.5 3.5V5.5M2.5 13V15M2.5 16.5V18.5" stroke="#222" stroke-width="1.5"/><circle cx="2.5" cy="9.2" r="2.5" fill="#222"/></svg>
<div class="a" style="left:40px;top:643px;width:200px;height:1px;background:#d5d5d5"></div>
<svg style="left:44px;top:654px" width="13" height="8" viewBox="0 0 13 8"><path d="M1 1L6.5 6.5L12 1" fill="none" stroke="#666" stroke-width="1.6"/></svg>
<div class="t fi" style="left:63px;top:651px;color:#4a4a4a">Parts (1)</div>
<svg style="left:65px;top:675px" width="16" height="16" viewBox="0 0 16 16"><path d="M0.7 8L3 6.5H8V2L10.5 0.7H14L15.3 2V15.3H3L0.7 13.5Z" fill="#fff" stroke="#555" stroke-width="1.1" stroke-linejoin="round"/><path d="M3 15.3V8.5H10V2H15.3M0.7 8L3 8.5" fill="none" stroke="#555" stroke-width="1.1"/></svg>
<div class="t fi" style="left:85px;top:677px;letter-spacing:-0.15px">Origin Cube</div>
<div class="a" style="left:245px;top:479px;width:33px;height:34px;background:#fff;border-top:1px solid #d6d6d6;border-bottom:1px solid #d6d6d6"></div>
<div class="a" style="left:245px;top:480px;width:1px;height:32px;background:#fff"></div>
<svg style="left:252px;top:488px" width="20" height="17" viewBox="0 0 20 17"><path d="M0.5 1L3.2 3.7L5.9 1" fill="none" stroke="#262626" stroke-width="1.5"/><path d="M3.5 7V17" stroke="#888" stroke-width="2"/><path d="M5.5 1.8H7M5.5 7H10M5.5 12H10M5.5 16H10" stroke="#262626" stroke-width="1.5"/><path d="M11 1.8H18M11 7H18M11 12H18M11 16H18" stroke="#e8e8e8" stroke-width="1"/></svg>
<div class="a" style="left:262px;top:79px;width:354px;height:584px;background:#fff;box-shadow:0 2px 10px rgba(0,0,0,0.24)"></div>
<svg style="left:262px;top:79px" width="354" height="583" viewBox="262 79 354 583"><g stroke="#f3f4f5" stroke-width="1.1" fill="none"><path d="M616 415.8L522 470L616 524.2M616 440.6L565 470L616 499.4"/></g><g fill="#f2f3f4"><circle cx="522" cy="470" r="2.3"/><circle cx="565" cy="470" r="2.3"/></g></svg>
<div class="t" style="left:268px;top:87.4px;font-size:13px;color:#333">Layout Sketches</div>
<div class="a" style="left:262px;top:107px;width:354px;height:1px;background:#d7dce2"></div>
<div class="a" style="left:560px;top:79px;width:28px;height:28px;background:#04930a"></div>
<svg style="left:566px;top:86px;" width="16" height="13" viewBox="0 0 16 13"><path d="M1.5 6.5L6 11L14.5 2" fill="none" stroke="#fff" stroke-width="2.8"/></svg>
<svg style="left:595px;top:87px;" width="13" height="13" viewBox="0 0 13 13"><path d="M1.5 1.5L11.5 11.5M11.5 1.5L1.5 11.5" stroke="#c9343a" stroke-width="3"/></svg>
<div class="t" style="left:301px;top:117.1px;font-size:12.4px;color:#2458c2">Current document</div>
<div class="t" style="left:482px;top:117.8px;font-size:12px;color:#555">Other documents</div>
<div class="a" style="left:262px;top:139px;width:354px;height:1px;background:#e2e2e2"></div>
<div class="a" style="left:262px;top:137px;width:177px;height:3px;background:#1a50b8"></div>
<svg style="left:279px;top:152px;" width="10" height="16" viewBox="0 0 10 16"><path d="M8 1.5L2 8L8 14.5" fill="none" stroke="#444" stroke-width="2.2"/></svg>
<div class="t" style="left:310px;top:144.8px;font-size:14px;font-weight:bold;color:#333;letter-spacing:-0.07px">Stage 1B Project Reference</div>
<svg style="left:311px;top:164px;" width="10" height="10" viewBox="0 0 10 10"><circle cx="2" cy="2" r="1.3" fill="none" stroke="#999" stroke-width="1"/><path d="M2 3.5V9.5M2 8Q2 6 8 6V4" fill="none" stroke="#999" stroke-width="1.1"/></svg>
<div class="t" style="left:323px;top:162.1px;font-size:12.2px;color:#9a9a9a">Main</div>
<div class="a" style="left:535px;top:144px;width:32px;height:32px;background:#f9f9f9;border:1px solid #e4e4e4;border-radius:4px"></div>
<div class="a" style="left:577px;top:144px;width:32px;height:32px;background:#f9f9f9;border:1px solid #e4e4e4;border-radius:4px"></div>
<svg style="left:544px;top:151px;" width="15" height="18" viewBox="0 0 15 18"><path d="M4 0V2M4 3.5V5.5M4 11.5V13.5M4 15V17" stroke="#262626" stroke-width="1.4"/><circle cx="4" cy="8.5" r="2.6" fill="#333"/><path d="M8 12.5H15M11.5 9V16" stroke="#1a50b8" stroke-width="2"/></svg>
<svg style="left:585px;top:151px;" width="18" height="17" viewBox="0 0 18 17"><circle cx="3.5" cy="3" r="2.2" fill="#fff" stroke="#262626" stroke-width="1.3"/><path d="M3.5 5.2V14.5M3.5 13Q3.5 10 8 10H10.5Q14.5 10 14.5 6.5" fill="none" stroke="#262626" stroke-width="1.6"/><circle cx="3.5" cy="14.5" r="1.6" fill="#262626"/><circle cx="15" cy="6" r="1.6" fill="#262626"/></svg>
<div class="a" style="left:262px;top:179px;width:354px;height:1px;background:#e6e6e6"></div>
<div class="a" style="left:268px;top:186px;width:342px;height:30px;border:1px solid #cfcfcf;border-radius:3px;background:#fff"></div>
<div class="t" style="left:274px;top:195.3px;font-size:11.4px;font-style:italic;color:#8a8a8a;letter-spacing:0.05px">Search entities or features</div>
<svg style="left:266px;top:240px;" width="11" height="8" viewBox="0 0 11 8"><path d="M1 1L5.5 6L10 1" fill="none" stroke="#333" stroke-width="1.6"/></svg>
<svg style="left:282px;top:224px;" width="70" height="39" viewBox="0 0 70 39"><path d="M0.8 23.2L25.6 1L69.2 13.7L43.8 36.3Z" fill="#e8eeef" stroke="#5f6a73" stroke-width="3" stroke-linejoin="round"/>
<path d="M13 12L56.7 25.2M47.5 7.2L22 29.9" stroke="#5f6a73" stroke-width="4.2" fill="none"/>
<path d="M14 12.6L55.5 25M46.5 8L23 29" stroke="#dfe6e8" stroke-width="1.1" fill="none"/>
<g fill="#5f6a73"><circle cx="25.6" cy="1.8" r="2.4"/><circle cx="35" cy="4.5" r="2.2"/><circle cx="47" cy="6.5" r="2.4"/><circle cx="60" cy="11.5" r="2.2"/><circle cx="69" cy="14" r="2.3"/><circle cx="64" cy="20" r="2.2"/><circle cx="1.2" cy="23" r="2.4"/><circle cx="6" cy="19" r="2.2"/><circle cx="11" cy="25" r="2.2"/><circle cx="22.5" cy="29.5" r="2.4"/><circle cx="22.5" cy="33" r="2.2"/><circle cx="34" cy="34" r="2.2"/><circle cx="44" cy="36.2" r="2.4"/><circle cx="52" cy="28" r="2.2"/><circle cx="16" cy="8" r="2.2"/></g>
<circle cx="38.8" cy="23" r="2.4" fill="#fff"/><circle cx="38.5" cy="27" r="2.3" fill="#222"/></svg>
<div class="t" style="left:358px;top:237.2px;font-size:12.6px;color:#6a6a6a">Master Sketch</div>
<svg style="left:322px;top:265px;" width="35" height="37" viewBox="0 0 35 37"><path d="M12.5 0.7L33.8 6.5V26.5L21.3 35L0.5 32V10.5Z" fill="#dcdcdc" stroke="#111" stroke-width="1.3" stroke-linejoin="round"/>
<path d="M0.5 10.5L21.3 16.5L33.8 6.5M21.3 16.5V35M12.5 0.7V21L0.5 32M12.5 21L33.8 26.5" fill="none" stroke="#111" stroke-width="1.2"/>
<path d="M12.5 21L21.3 16.5V35L0.5 32Z" fill="#cfcfcf" opacity=".6"/></svg>
<div class="t" style="left:376.5px;top:278.1px;font-size:12.6px;color:#6a6a6a">Origin Cube</div>
<div class="a" style="left:262px;top:305px;width:354px;height:39px;background:#b4def5"></div>
<div class="a" style="left:262px;top:346px;width:354px;height:40px;background:#b4def5"></div>
<svg style="left:304px;top:318px;" width="71" height="15" viewBox="0 0 71 15"><path d="M1.5 0.3V13.6M68.7 0.3V13.6" stroke="#5f6a73" stroke-width="2.6"/>
<path d="M1 1.8H69M1 7.1H69" stroke="#5f6a73" stroke-width="1.9" fill="none"/>
<path d="M1 11.5H13M56.8 11.5H69" stroke="#5f6a73" stroke-width="1.6"/>
<g fill="#5f6a73"><circle cx="13.1" cy="7.1" r="2.4"/><circle cx="13.1" cy="11.5" r="2.4"/><circle cx="56.8" cy="7.1" r="2.4"/><circle cx="56.8" cy="11.5" r="2.4"/><circle cx="1.5" cy="4.5" r="1.6"/><circle cx="68.7" cy="4.5" r="1.6"/></g>
<circle cx="35" cy="4.4" r="2.5" fill="#fff" stroke="#5f6a73" stroke-width="1.4"/></svg>
<div class="t" style="left:376px;top:319.3px;font-size:12.6px;color:#555;letter-spacing:-0.1px">DT Side Layout</div>
<svg style="left:318px;top:346px;" width="43" height="40" viewBox="0 0 43 40"><rect x="2.6" y="1.4" width="36.8" height="36.8" fill="#aad3e7" stroke="#5f6a73" stroke-width="2.8"/>
<path d="M1 1.4H41M1 38.2H41" stroke="#5f6a73" stroke-width="2.8"/>
<path d="M2.6 21.4H39.4M2.6 24.2H39.4" stroke="#5f6a73" stroke-width="1.3"/>
<g fill="#5f6a73"><circle cx="2.6" cy="7" r="2.2"/><circle cx="39.4" cy="7" r="2.2"/><circle cx="2.6" cy="32.5" r="2.2"/><circle cx="39.4" cy="32.5" r="2.2"/><circle cx="8" cy="38" r="2.2"/><circle cx="34" cy="38" r="2.2"/><circle cx="8" cy="2" r="1.8"/><circle cx="34" cy="2" r="1.8"/><circle cx="21" cy="24" r="1.5"/></g>
<circle cx="21" cy="19.8" r="2.5" fill="#fff" stroke="#5f6a73" stroke-width="1.4"/></svg>
<div class="t" style="left:376px;top:360.3px;font-size:12.6px;color:#555;letter-spacing:-0.1px">DT Top Layout</div>
<div class="a" style="left:269px;top:651px;width:112px;height:2px;background:#666"></div>
<svg style="left:339px;top:645px;" width="14" height="14" viewBox="0 0 14 14"><circle cx="7" cy="7" r="5.1" fill="#fff" stroke="#666" stroke-width="1.2"/></svg>
<svg style="left:597px;top:645px;" width="15" height="15" viewBox="0 0 15 15"><circle cx="7.5" cy="7.5" r="6.8" fill="#aaa"/><path d="M5.2 6Q5.2 3.6 7.5 3.6Q9.8 3.6 9.8 5.6Q9.8 6.8 8.5 7.4Q7.7 7.9 7.7 9" fill="none" stroke="#fff" stroke-width="1.7"/><circle cx="7.7" cy="11.3" r="1" fill="#fff"/></svg>
<svg style="left:1740px;top:80px;" width="180" height="180" viewBox="0 0 180 180"><path d="M89.7 11.2L97.5 20.8L82.0 20.8Z" fill="#dfe5ec"/><path d="M89.7 160.7L97.5 151.2L82.0 151.2Z" fill="#dfe5ec"/><path d="M15.9 86.0L24.5 78.3L24.5 93.7Z" fill="#dfe5ec"/><path d="M164.5 86.0L155.0 78.3L155.0 93.7Z" fill="#dfe5ec"/><path d="M69.0 21.5Q50.0 27.0 40.0 39.0" fill="none" stroke="#dfe5ec" stroke-width="3.5"/><path d="M35.5 45.0L37.0 33.0L46.0 40.0Z" fill="#dfe5ec"/><path d="M110.3 21.5Q129.0 27.0 139.0 39.0" fill="none" stroke="#dfe5ec" stroke-width="3.5"/><path d="M144.0 45.0L142.5 33.0L133.5 40.0Z" fill="#dfe5ec"/><path d="M89.8 45.5L128.0 66.0L128.0 109.0L89.8 128.5L52.5 109.0L52.5 66.0Z" fill="#dfe5ec" stroke="#dfe5ec" stroke-width="5" stroke-linejoin="round"/><path d="M66.0 62.0L89.8 50.0L114.0 62.0L89.8 74.5Z" fill="#fff" stroke="#fff" stroke-width="5" stroke-linejoin="round"/><path d="M57.0 78.0L80.5 91.5L81.5 118.5L57.5 105.5Z" fill="#fff" stroke="#fff" stroke-width="5" stroke-linejoin="round"/><path d="M98.5 91.5L123.5 78.0L122.5 105.5L98.0 118.5Z" fill="#fff" stroke="#fff" stroke-width="5" stroke-linejoin="round"/><circle cx="89.79999999999995" cy="84.80000000000001" r="6.2" fill="#fff"/><ellipse cx="55.5" cy="67" rx="2" ry="4.5" transform="rotate(35 55.5 67)" fill="#fff"/><ellipse cx="124" cy="67" rx="2" ry="4.5" transform="rotate(-35 124 67)" fill="#fff"/><ellipse cx="89.79999999999995" cy="124.5" rx="4.5" ry="1.8" fill="#fff"/><path d="M89.8 42.0V45.5" stroke="#fff" stroke-width="2"/><text transform="translate(81,58) rotate(30) skewX(-25)" font-family="Liberation Sans" font-size="9.5" fill="#555">Top</text><text transform="translate(59,90) rotate(28) skewY(0)" font-family="Liberation Sans" font-size="9.5" fill="#555">Front</text><text transform="translate(102,106) rotate(-30)" font-family="Liberation Sans" font-size="9.5" fill="#555">Right</text><path d="M46.7 110.5L46.7 63.5" stroke="#3a3ae0" stroke-width="1.3"/><path d="M46.7 110.5L87.8 134.2" stroke="#e03030" stroke-width="1.3"/><path d="M46.7 110.5L87.8 87.0" stroke="#3cb83c" stroke-width="1" opacity=".8"/><text x="42" y="61" font-family="Liberation Sans" font-size="12.5" fill="#3a3ae0">Z</text><text x="91" y="144" font-family="Liberation Sans" font-size="12.5" fill="#e03030">X</text><text x="92" y="88" font-family="Liberation Sans" font-size="10" fill="#8fd08f">Y</text></svg>
<svg style="left:1866px;top:223px;" width="19" height="19" viewBox="0 0 19 19"><path d="M9.5 1L18 4V15L9.5 18L1 15V4Z" fill="#c8c8c8" stroke="#333" stroke-width="1.1" stroke-linejoin="round"/><path d="M1 4L9.5 7L18 4M9.5 7V18" fill="none" stroke="#333" stroke-width="1"/><path d="M9.5 7L18 4V15L9.5 18Z" fill="#e0e0e0"/><path d="M1 4L9.5 7V18L1 15Z" fill="#999"/><path d="M9.5 1L18 4V15L9.5 18L1 15V4Z" fill="none" stroke="#333" stroke-width="1.1"/></svg>
<svg style="left:1891px;top:230px;" width="9" height="5" viewBox="0 0 9 5"><path d="M0 0H9L4.5 5Z" fill="#333"/></svg>
<div class="a" style="left:1888px;top:391px;width:33px;height:133px;border:1px solid #cfcfcf;border-right:none;background:#fff"></div>
<div class="a" style="left:1888px;top:424px;width:32px;height:1px;background:#cfcfcf"></div>
<div class="a" style="left:1888px;top:457px;width:32px;height:1px;background:#cfcfcf"></div>
<div class="a" style="left:1888px;top:490px;width:32px;height:1px;background:#cfcfcf"></div>
<div class="a" style="left:1888px;top:534px;width:33px;height:67px;border:1px solid #cfcfcf;border-right:none;background:#fff"></div>
<div class="a" style="left:1888px;top:567px;width:32px;height:1px;background:#cfcfcf"></div>
<svg style="left:1894px;top:399px;" width="22" height="20" viewBox="0 0 22 20"><path d="M2 13L9 1L14 4L10 13Z" fill="#8a8a8a"/><path d="M5 13L10 3L17 6L13 13Z" fill="#a8a8a8"/><path d="M8 13L13 5L20 9L17 13Z" fill="#c4c4c4"/><rect x="1" y="12.5" width="19" height="6.5" rx="1.5" fill="#e4e4e4" stroke="#777" stroke-width="1"/><path d="M7.5 12.5V19M13.5 12.5V19" stroke="#999" stroke-width="1"/><circle cx="4" cy="15.7" r="1.2" fill="#444"/></svg>
<svg style="left:1895px;top:431px;" width="21" height="21" viewBox="0 0 21 21"><rect x="0" y="0" width="10" height="8" fill="#1f5fd0"/><path d="M0 2.7H10M0 5.3H10M3.3 0V8M6.7 0V8" stroke="#fff" stroke-width="0.9"/><path d="M5 8.5L12 5.5L19.5 9V17L12.5 20.5L5 17Z" fill="#fff" stroke="#262626" stroke-width="1.1" stroke-linejoin="round"/><path d="M5 8.5L12.5 12L19.5 9M12.5 12V20.5" fill="none" stroke="#262626" stroke-width="1"/></svg>
<svg style="left:1894px;top:464px;" width="22" height="22" viewBox="0 0 22 22"><rect x="1" y="0" width="10" height="8" fill="#333"/><path d="M1 2.7H11M1 5.3H11M4.3 0V8M7.7 0V8" stroke="#fff" stroke-width="0.9"/><path d="M7 11L12 8.5L17 11V16L12 18.5L7 16Z" fill="#e6e6e6" stroke="#262626" stroke-width="1"/><path d="M7 11L12 13.5L17 11M12 13.5V18.5" fill="none" stroke="#262626" stroke-width=".9"/><path d="M3.5 9Q2 9 2 11V13L1 14L2 15V18Q2 20 3.5 20M19.5 8Q21 8 21 10V13L22 14L21 15V18Q21 20 19.5 20" fill="none" stroke="#262626" stroke-width="1.1"/></svg>
<svg style="left:1894px;top:497px;" width="22" height="22" viewBox="0 0 22 22"><rect x="1" y="0" width="10" height="8" fill="#333"/><path d="M1 2.7H11M1 5.3H11M4.3 0V8M7.7 0V8" stroke="#fff" stroke-width="0.9"/><path d="M3 9Q0.5 14 3 21M19 9Q21.5 14 19 21" fill="none" stroke="#262626" stroke-width="1.8"/><text x="5" y="19" font-family="Liberation Serif" font-style="italic" font-weight="bold" font-size="13" fill="#262626">x</text></svg>
<svg style="left:1893px;top:539px;" width="24" height="24" viewBox="0 0 24 24"><rect x="0.5" y="0.5" width="23" height="23" rx="3" fill="#d6d6d6"/><circle cx="12" cy="12" r="9" fill="#e94c3f"/><path d="M12 12L5.6 5.6A9 9 0 0 1 18.4 5.6Z" fill="#4fbf4f"/><path d="M12 12L18.4 5.6A9 9 0 0 1 18.4 18.4Z" fill="#3ab0e8"/><path d="M12 12L18.4 18.4A9 9 0 0 1 5.6 18.4Z" fill="#f0b040"/></svg>
<svg style="left:1893px;top:572px;" width="24" height="24" viewBox="0 0 24 24"><rect x="0.5" y="0.5" width="23" height="23" rx="3" fill="#d6d6d6"/><rect x="3" y="4" width="18" height="16" fill="#0a58e0" stroke="#223" stroke-width="1"/><text x="12" y="17" font-family="Liberation Serif" font-weight="bold" font-size="12" fill="#e8e8e8" text-anchor="middle" letter-spacing="-1">MK</text></svg>
<svg style="left:1890px;top:912px;" width="20" height="15" viewBox="0 0 20 15"><path d="M0.7 13.5V10A9.3 9.3 0 0 1 19.3 10V13.5Z" fill="#fff" stroke="#262626" stroke-width="1.1"/><path d="M5 13.5A5 5 0 0 1 15 13.5" fill="none" stroke="#262626" stroke-width="1.3"/><path d="M3 7L4.5 8M10 2V3.5M17 7L15.5 8" stroke="#262626" stroke-width=".9"/><path d="M0.7 13.5H19.3" stroke="#262626" stroke-width="1.2"/></svg>
<svg style="left:49px;top:940px" width="16" height="16" viewBox="0 0 16 16"><path d="M8 0.5V15.5M0.5 8H15.5" stroke="#555" stroke-width="2.4"/></svg>
<svg style="left:73px;top:933px" width="165" height="28" viewBox="0 0 165 28"><path d="M1 0H32L41 13.5L32 27H1Z" fill="#e4e4e4"/><path d="M35 0H154L163 13.5L154 27H35L44 13.5Z" fill="#fff"/></svg>
<svg style="left:83px;top:937px" width="18" height="17" viewBox="0 0 18 17"><path d="M9 0.5L17.5 8.5H15V16.5H10.5V11.5H7.5V16.5H3V8.5H0.5Z" fill="#666"/><rect x="12.5" y="1.5" width="2.5" height="5" fill="#666"/></svg>
<svg style="left:126px;top:938px" width="19" height="14" viewBox="0 0 19 14"><path d="M0.7 0.7H6.5L8 2.7H18.3V13.3H0.7Z" fill="none" stroke="#333" stroke-width="1.2"/></svg>
<div class="t" style="left:150px;top:937px;font-size:14px;color:#555">Drivetrain</div>
<div class="a" style="left:233px;top:933px;width:200px;height:27px;background:#e9e9e9;border-radius:5px 0 5px 5px"></div>
<svg style="left:246px;top:939px" width="14" height="14" viewBox="0 0 14 14"><circle cx="7" cy="7" r="6.5" fill="#5b9be0"/><path d="M7 2.5V9" stroke="#fff" stroke-width="2"/><path d="M3.5 7.5H10.5L7 11.5Z" fill="#fff"/></svg>
<svg style="left:264px;top:938px" width="18" height="17" viewBox="0 0 18 17"><path d="M0.6 2L3 0.6H14L17.4 2.6V16.4H3.5L0.6 14.5Z" fill="#fff" stroke="#333" stroke-width="1.1" stroke-linejoin="round"/><path d="M3.5 16.4V3H17.4M0.6 2L3.5 3" fill="none" stroke="#333" stroke-width="1.1"/><rect x="3.5" y="3" width="10" height="9" fill="#8a8a8a" stroke="#333" stroke-width="1"/><path d="M0.6 2L3.5 3V12H13.5V3" fill="#b8b8b8" opacity=".7"/></svg>
<div class="t" style="left:286px;top:939px;font-size:14px;color:#555">Drivetrain Assembly</div>
<div class="a" style="left:436px;top:933px;width:199px;height:27px;background:#fff;border-bottom:2px solid #1a50b8;border-radius:0 5px 0 0"></div>
<svg style="left:447px;top:938px" width="17" height="18" viewBox="0 0 17 18"><path d="M0.6 5.5L2.5 4.5H6.5V17.4H2.5L0.6 15.5Z" fill="#fff" stroke="#333" stroke-width="1.1"/><path d="M2.5 17.4V5.5" stroke="#333" stroke-width="1"/><path d="M8 2L10 0.6H14L16.4 2V17.4H10L8 15.5Z" fill="#fff" stroke="#333" stroke-width="1.1"/><path d="M10 17.4V2.5H16.4" fill="none" stroke="#333" stroke-width="1"/></svg>
<div class="t" style="left:468px;top:939px;font-size:14px;color:#555">Drivetrain</div>
</body></html>
